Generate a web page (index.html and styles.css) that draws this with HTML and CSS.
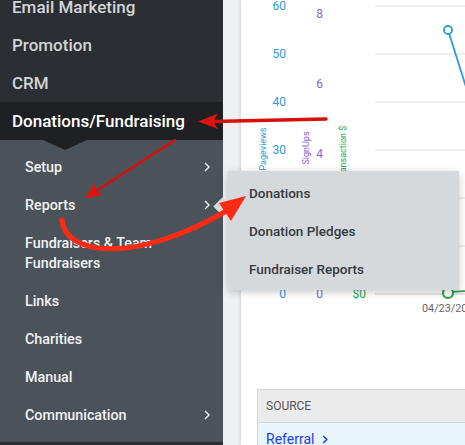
FILE: index.html
```html
<!DOCTYPE html>
<html>
<head>
<meta charset="utf-8">
<link rel="stylesheet" href="styles.css">
</head>
<body>
<div class="app">
  <nav class="sidebar">
    <ul class="top-menu">
      <li class="top-item">Email Marketing</li>
      <li class="top-item">Promotion</li>
      <li class="top-item">CRM</li>
      <li class="top-item active">Donations/Fundraising</li>
    </ul>
    <ul class="sub-menu">
      <li class="sub-item">Setup<svg class="chev" viewBox="0 0 6 10"><polyline points="1,1 5,5 1,9"/></svg></li>
      <li class="sub-item">Reports<svg class="chev" viewBox="0 0 6 10"><polyline points="1,1 5,5 1,9"/></svg></li>
      <li class="sub-item">Fundraisers &amp; Team<br>Fundraisers</li>
      <li class="sub-item">Links</li>
      <li class="sub-item">Charities</li>
      <li class="sub-item">Manual</li>
      <li class="sub-item">Communication<svg class="chev" viewBox="0 0 6 10"><polyline points="1,1 5,5 1,9"/></svg></li>
    </ul>
  </nav>
  <main class="main">
    <section class="panel">
      <svg class="chart" width="224" height="340" viewBox="0 0 224 340">
        <g class="grid">
          <line x1="134" y1="6" x2="224" y2="6"/>
          <line x1="134" y1="54" x2="224" y2="54"/>
          <line x1="134" y1="102" x2="224" y2="102"/>
          <line x1="134" y1="150" x2="224" y2="150"/>
          <line x1="134" y1="198" x2="224" y2="198"/>
          <line x1="134" y1="246" x2="224" y2="246"/>
          <line class="axis" x1="134" y1="294" x2="224" y2="294"/>
        </g>
        <g class="lbl-blue">
          <text x="45" y="10">60</text>
          <text x="45" y="58">50</text>
          <text x="45" y="106">40</text>
          <text x="45" y="154">30</text>
          <text x="45" y="202">20</text>
          <text x="45" y="250">10</text>
          <text x="45" y="298">0</text>
        </g>
        <g class="lbl-purple">
          <text x="82" y="18">8</text>
          <text x="82" y="88">6</text>
          <text x="82" y="158">4</text>
          <text x="82" y="227">2</text>
          <text x="82" y="298">0</text>
        </g>
        <g class="lbl-green">
          <text x="125" y="298">$0</text>
        </g>
        <text class="title t-blue" transform="translate(25,149) rotate(-90)">Pageviews</text>
        <text class="title t-purple" transform="translate(68,148) rotate(-90)">SignUps</text>
        <text class="title t-green" transform="translate(105,153) rotate(-90)">Transaction $</text>
        <polyline class="series-blue" points="207,30 226,90"/>
        <circle class="dot-blue" cx="207" cy="30" r="4"/>
        <polyline class="series-green" points="207,292 226,291"/>
        <circle class="dot-green" cx="207" cy="293" r="5"/>
        <text class="date" x="181" y="312">04/23/2021</text>
      </svg>
      <table class="sources">
        <thead><tr><th>Source</th></tr></thead>
        <tbody><tr><td><span class="link">Referral</span><svg class="link-chev" viewBox="0 0 6 10"><polyline points="1,1 5,5 1,9"/></svg></td></tr></tbody>
      </table>
    </section>
  </main>
</div>

<div class="dropdown">
  <div class="dd-item">Donations</div>
  <div class="dd-item">Donation Pledges</div>
  <div class="dd-item">Fundraiser Reports</div>
</div>

<svg class="annotations" width="465" height="445" viewBox="0 0 465 445">
  <line class="arrow-dark" x1="326" y1="119" x2="212" y2="121.5"/>
  <polygon class="head-dark" points="198,121.5 218,113.5 213,121.5 218,129"/>
  <line class="arrow-dark thin" x1="175" y1="140" x2="96" y2="191"/>
  <polygon class="head-dark" points="85,198 94.6,183.4 96,191 102.2,195.2"/>
  <path class="arrow-bright" d="M62,220 C66,258 140,262 228,210"/>
  <polygon class="head-bright" points="246,196 219,203 231,221"/>
</svg>
</body>
</html>
```
FILE: styles.css
```css
* { box-sizing: border-box; }
html, body { margin: 0; padding: 0; }
body {
  width: 465px;
  height: 445px;
  overflow: hidden;
  position: relative;
  font-family: Roboto, "Liberation Sans", sans-serif;
  background: #eef0f2;
}
.app {
  display: flex;
  height: 445px;
}
.sidebar {
  width: 223px;
  flex: 0 0 223px;
  background: #2b2e32;
  height: 445px;
  overflow: hidden;
}
ul { list-style: none; margin: 0; padding: 0; }
.top-menu { margin-top: -12px; }
.top-item {
  position: relative;
  padding: 9px 12px;
  line-height: 20px;
  font-size: 17px;
  font-weight: 500;
  color: #d3d5d8;
  white-space: nowrap;
}
.top-item.active {
  background: #1e2023;
  color: #ffffff;
}
.top-item.active::after {
  content: "";
  position: absolute;
  left: 43px;
  bottom: -10px;
  border-left: 22px solid transparent;
  border-right: 22px solid transparent;
  border-top: 10px solid #1e2023;
  z-index: 2;
}
.sub-menu {
  background: #4b525a;
  padding: 8px 0;
}
.sub-item {
  position: relative;
  padding: 9px 25px;
  line-height: 20px;
  font-size: 14.3px;
  font-weight: 500;
  color: #f2f3f4;
}
.chev {
  position: absolute;
  left: 204px;
  top: 14px;
  width: 6px;
  height: 10px;
  fill: none;
  stroke: #f2f3f4;
  stroke-width: 1.4;
}
.main {
  flex: 1;
  padding-left: 18px;
  height: 445px;
}
.panel {
  background: #ffffff;
  height: 445px;
  box-shadow: -1px 0 3px rgba(0,0,0,0.12);
  padding-left: 16px;
  overflow: hidden;
}
.chart {
  display: block;
  margin-left: -16px;
  font-family: Roboto, "Liberation Sans", sans-serif;
}
.grid line { stroke: #dedede; stroke-width: 1; }
.grid line.axis { stroke: #cccccc; stroke-width: 1.2; }
.lbl-blue text, .lbl-purple text, .lbl-green text {
  font-size: 12px;
  text-anchor: end;
}
.lbl-blue text { fill: #2c9ad8; }
.lbl-purple text { fill: #8a63d6; }
.lbl-green text { fill: #2aa54b; }
.title { font-size: 9px; text-anchor: middle; }
.t-blue { fill: #2c9ad8; }
.t-purple { fill: #8a63d6; }
.t-green { fill: #2aa54b; }
.series-blue { fill: none; stroke: #2c9ad8; stroke-width: 1.8; }
.dot-blue { fill: #ffffff; stroke: #2c9ad8; stroke-width: 1.8; }
.series-green { fill: none; stroke: #2aa54b; stroke-width: 1.8; }
.dot-green { fill: #ffffff; stroke: #2aa54b; stroke-width: 2.2; }
.date { font-size: 10.8px; fill: #666666; }
.sources {
  margin-top: 49px;
  width: 260px;
  border-collapse: collapse;
}
.sources th {
  height: 33px;
  background: #ebebeb;
  border: 1px solid #d6d6d6;
  text-align: left;
  padding: 0 8px;
  font-size: 12px;
  font-weight: 400;
  color: #555555;
  text-transform: uppercase;
}
.sources td {
  background: #e7f5fd;
  padding: 6px 8px;
  height: 34px;
  vertical-align: top;
  border-left: 1px solid #d6d6d6;
}
.link {
  color: #1f3de0;
  font-size: 14px;
  line-height: 20px;
}
.link-chev {
  width: 6px;
  height: 9px;
  margin-left: 8px;
  fill: none;
  stroke: #1f3de0;
  stroke-width: 1.6;
}
.dropdown {
  position: absolute;
  left: 228px;
  top: 171px;
  width: 231px;
  height: 119px;
  background: #d6d9dc;
  padding: 3px 0;
  box-shadow: 0 2px 8px rgba(0,0,0,0.22);
  z-index: 5;
}
.dropdown::before {
  content: "";
  position: absolute;
  left: -12px;
  top: 29px;
  width: 13px;
  height: 13px;
  background: #d6d9dc;
  transform: rotate(45deg);
}
.dd-item {
  position: relative;
  padding: 9px 21px;
  line-height: 20px;
  font-size: 13.5px;
  font-weight: 500;
  color: #353a40;
}
.annotations {
  position: absolute;
  left: 0;
  top: 0;
  z-index: 10;
  pointer-events: none;
}
.arrow-dark { stroke: #d8100c; stroke-width: 3.5; stroke-linecap: round; }
.arrow-dark.thin { stroke-width: 2.6; }
.head-dark { fill: #e0120e; }
.arrow-bright { fill: none; stroke: #ff2a14; stroke-width: 5; stroke-linecap: round; }
.head-bright { fill: #ff2a14; }
```
